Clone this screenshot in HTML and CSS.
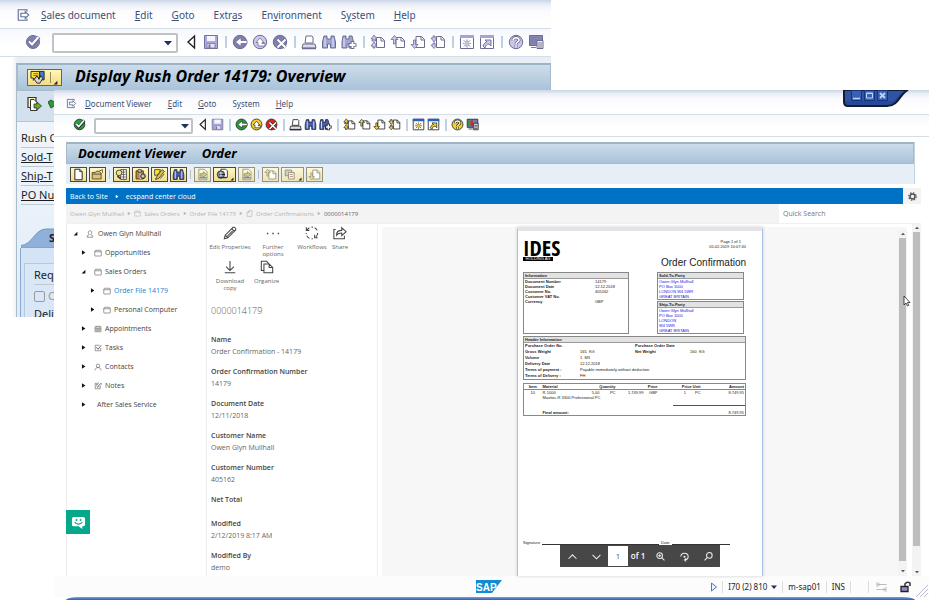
FILE: index.html
```html
<!DOCTYPE html>
<html lang="en">
<head>
<meta charset="utf-8">
<title>Document Viewer Order</title>
<link rel="stylesheet" href="styles.css">
</head>
<body>
<svg class="sprite" aria-hidden="true">
  <symbol id="exit" viewBox="0 0 16 16"><path d="M12 4V2H2v12h10v-2M5 6h5V4l4 4-4 4v-2H5z" fill="none" stroke="#5f7195" stroke-width="1.3"/></symbol>
  <symbol id="ok" viewBox="0 0 16 16"><circle cx="8" cy="8" r="6.5" fill="var(--go)" stroke="var(--ink)"/><path d="M4 8l3 3 7-8" fill="none" stroke="var(--ink)" stroke-width="3.6"/><path d="M4 7.500l3 3 6.500-7.500" fill="none" stroke="#fff" stroke-width="2"/></symbol>
  <symbol id="tri" viewBox="0 0 16 16"><path d="M11.500 2v12L5 8z" fill="#fff" stroke="#222" stroke-width="1.4"/></symbol>
  <symbol id="save" viewBox="0 0 16 16"><path d="M1.500 1.500h13v13h-13z" fill="#a9abdc" stroke="#73739f"/><path d="M4 2h8v5H4z" fill="#f5f5ff"/><path d="M4 9.500h8V14H4z" fill="#e4e4f6" stroke="#73739f" stroke-width=".8"/><path d="M5.500 10.500h2V14h-2z" fill="#73739f"/></symbol>
  <symbol id="back" viewBox="0 0 16 16"><circle cx="8" cy="8" r="6.700" fill="var(--go)" stroke="var(--ink)"/><path d="M15 6.500H9V3.500L3.500 8 9 12.500v-3h6z" fill="#fff" stroke="var(--ink)" stroke-width=".8"/></symbol>
  <symbol id="up" viewBox="0 0 16 16"><circle cx="8" cy="8" r="6.700" fill="var(--hot)" stroke="var(--ink)"/><path d="M8 4L4 8.500h2V12h7V9.500H10V8.500h2z" fill="#fff" stroke="var(--ink)" stroke-width=".8"/></symbol>
  <symbol id="cancel" viewBox="0 0 16 16"><circle cx="8" cy="8" r="6.700" fill="var(--stop)" stroke="var(--ink)"/><path d="M5.500 5.500l8 8m0-8l-8 8" stroke="var(--ink)" stroke-width="3.500"/><path d="M5.500 5.500l8 8m0-8l-8 8" stroke="#fff" stroke-width="2"/></symbol>
  <symbol id="print" viewBox="0 0 16 16"><path d="M5 2h6l1 1v6H4z" fill="#fff" stroke="var(--ink)"/><path d="M2 10h12l1 4H1z" fill="#dcdcf0" stroke="var(--ink)"/><path d="M1 14.500h14" stroke="var(--ink)" stroke-width="1.500"/></symbol>
  <symbol id="find" viewBox="0 0 16 16"><path d="M3 2h3v3h4V2h3l1.500 6v6h-5v-4h-3v4h-5V8z" fill="var(--bin)" stroke="var(--ink)"/><path d="M4 4v9M12 4v9" stroke="#d5dcff" stroke-width="1.200"/></symbol>
  <symbol id="findnext" viewBox="0 0 16 16"><path d="M2 2h3v3h3V2h3l1.500 6v6H8v-4H6v4H1V8z" fill="var(--bin)" stroke="var(--ink)"/><path d="M3 4v9" stroke="#d5dcff" stroke-width="1.200"/><path d="M11.500 7v8M7.500 11h8" stroke="var(--ink)" stroke-width="3.600"/><path d="M11.500 8v6M8.500 11h6" stroke="#fff" stroke-width="1.800"/></symbol>
  <symbol id="pg1" viewBox="0 0 16 16"><path d="M6.500 3.500h5l3 3v7h-8z" fill="#fff" stroke="var(--ink)"/><path d="M11 3.500V7h3.500" fill="none" stroke="var(--ink)"/><path d="M4 1L1 5h2v1H2v1h4V6H5V5h2zM4 8L1 12h2v2h2v-2h2z" fill="var(--hot)" stroke="var(--ink)" stroke-width=".8"/></symbol>
  <symbol id="pg2" viewBox="0 0 16 16"><path d="M6 3.500h5.500l3 3v7H6z" fill="#fff" stroke="var(--ink)"/><path d="M11 3.500V7h3.500" fill="none" stroke="var(--ink)"/><path d="M4.500 1.500L1 5.500h2.500V10h2V5.500H8z" fill="var(--hot)" stroke="var(--ink)" stroke-width=".8"/></symbol>
  <symbol id="pg3" viewBox="0 0 16 16"><path d="M6 2.500h5.500l3 3v8H6z" fill="#fff" stroke="var(--ink)"/><path d="M11 2.500V6h3.500" fill="none" stroke="var(--ink)"/><path d="M4.500 14.500L1 10.500h2.500V6h2v4.500H8z" fill="var(--hot)" stroke="var(--ink)" stroke-width=".8"/></symbol>
  <symbol id="pg4" viewBox="0 0 16 16"><path d="M6.500 2.500h5l3 3v8h-8z" fill="#fff" stroke="var(--ink)"/><path d="M11 2.500V6h3.500" fill="none" stroke="var(--ink)"/><path d="M4 8L1 4h2V2h2v2h2zM4 14.500L1 11h2V9h2v2h2z" fill="var(--hot)" stroke="var(--ink)" stroke-width=".8"/></symbol>
  <symbol id="session" viewBox="0 0 16 16"><path d="M1.500 1.500h13v13h-13z" fill="#fff" stroke="var(--ink)"/><path d="M1 1h14v3H1z" fill="var(--cap)"/><path d="M8 5.500v8M4 9.500h8M5 6.500l6 6m0-6l-6 6" stroke="var(--ink)" stroke-width="1"/><path d="M8 6v7M4.500 9.500h7M6 7.500l4 4m0-4l-4 4" stroke="var(--hot)" stroke-width=".8"/><circle cx="8" cy="9.500" r="1.300" fill="var(--hot)"/></symbol>
  <symbol id="shortcut" viewBox="0 0 16 16"><path d="M1.500 1.500h13v13h-13z" fill="#fff" stroke="var(--ink)"/><path d="M1 1h14v3H1z" fill="var(--cap)"/><path d="M6 6h6v6l-2-2c-2 0-3 1-4 4l-2-2c1-3 3-4 4-4z" fill="var(--hot)" stroke="var(--ink)" stroke-width=".9"/></symbol>
  <symbol id="help" viewBox="0 0 16 16"><circle cx="8" cy="8" r="6.700" fill="var(--hot)" stroke="var(--ink)"/><path d="M5 6.500c0-4 6.500-3.500 6 0C10.800 8 8 8 8 10.200M8 11.300v2" fill="none" stroke="var(--ink)" stroke-width="3.200"/><path d="M5 6.500c0-4 6.500-3.500 6 0C10.800 8 8 8 8 10.200M8 11.300v2" fill="none" stroke="#fff" stroke-width="1.600"/></symbol>
  <symbol id="layout" viewBox="0 0 16 16"><path d="M1.500 1.500h13v10h-13z" fill="var(--l0)" stroke="var(--ink)"/><path d="M2.500 3h3v7h-3z" fill="var(--go)"/><path d="M5.500 3h3v7h-3z" fill="var(--stop)"/><path d="M9 6.500h6v8H9z" fill="#eee" stroke="var(--ink)"/><path d="M10 9h4M10 11h4M10 13h4M3 13.500h5" stroke="var(--ink)" stroke-width=".9"/></symbol>
  <symbol id="new" viewBox="0 0 16 16"><path d="M3.500 1.500h6l3 3v10h-9z" fill="#fff" stroke="#222" stroke-width="1.200"/><path d="M9.500 1.500v3h3" fill="none" stroke="#222"/></symbol>
  <symbol id="open" viewBox="0 0 16 16"><path d="M1.500 13.500v-8h4l1-1.500h5v2h1v7.500z" fill="#d9c38b" stroke="#4a3d1e"/><path d="M1.500 7.500h11" stroke="#4a3d1e"/><path d="M10 4l4-2v4" fill="#fff" stroke="#4a3d1e"/></symbol>
  <symbol id="list" viewBox="0 0 16 16"><path d="M7 2h7v12H7z" fill="#fff" stroke="#333"/><path d="M8 5h5M8 8h5M8 11h5M10.500 2v12" stroke="#555"/><circle cx="5" cy="6" r="3.500" fill="#e6e38a" stroke="#333"/><path d="M3 10l4 3" stroke="#333" stroke-width="2"/></symbol>
  <symbol id="clip" viewBox="0 0 16 16"><path d="M2.500 3.500h9v10h-9z" fill="#b98346" stroke="#3d2c12"/><path d="M5 2h4v3H5z" fill="#ddd" stroke="#333"/><path d="M7 7h4v6H7z" fill="#fff"/><circle cx="11" cy="10" r="3" fill="#8d8d8d" stroke="#222"/><circle cx="11" cy="10" r="1" fill="#fff"/></symbol>
  <symbol id="edit" viewBox="0 0 16 16"><path d="M2 2h7l-1 4-4 3H2z" fill="#ffe23d" stroke="#333"/><path d="M14 4L7 13l-4 1 2-4 6-8z" fill="#d8c63a" stroke="#333"/><path d="M9 13l5-6" stroke="#333"/></symbol>
  <symbol id="folderarrow" viewBox="0 0 16 16"><path d="M3.500 1.500h7l3 3v10h-10z" fill="#f6f6ee" stroke="#8c8b77"/><path d="M5 7h4V4.500L13 8l-4 3.500V10H5z" fill="#d9d264" stroke="#8c8b77"/><path d="M4 12h9" stroke="#8c8b77" stroke-width="2"/></symbol>
  <symbol id="printq" viewBox="0 0 16 16"><path d="M6 1.500h6l2 2v8H6z" fill="#fff" stroke="#222"/><circle cx="6" cy="8" r="4.500" fill="#8590a8" stroke="#222"/><path d="M3 12h10M4 8h7" stroke="#222" stroke-width="1.400"/><path d="M6 5v5" stroke="#fff"/></symbol>
  <symbol id="copies" viewBox="0 0 16 16"><path d="M1.500 2.500h8v7h-8z" fill="#c3d8c2" stroke="#85887d"/><path d="M5.500 5.500h7v8h-7z" fill="#f7f7ef" stroke="#85887d"/><path d="M7 8h4M7 10.500h4" stroke="#cc7a6a"/></symbol>
  <symbol id="services" viewBox="0 0 20 16"><path d="M2.500 1.500h9v7H7l-2 2.500v-2.500H2.500z" fill="#ffe23d" stroke="#222"/><path d="M5 4h5M5 6h4" stroke="#7a6a10"/><path d="M11.500 1.500h5v9h-4z" fill="#3d7fd4" stroke="#222"/><path d="M6 10l3-4 2 4 2-4 2 3-3 5h-3z" fill="#d8d8d8" stroke="#222"/></symbol>
  <symbol id="outdoc" viewBox="0 0 16 16"><path d="M2 1.500h8v10H2z" fill="#fff7b0" stroke="#333" stroke-width="1.200"/><path d="M4.500 3.500H8l3 3v8H4.500z" fill="#fff" stroke="#333"/><path d="M8 8h3V6l4.500 4L11 14v-2H8z" fill="#67ab25" stroke="#333" stroke-width=".8"/></symbol>
  <symbol id="folder" viewBox="0 0 16 16"><path d="M1.500 13V4.500L3 2.500h10l1.500 2V13q0 1-1 1h-11q-1 0-1-1zM1.500 5.500h13" fill="none" stroke="currentColor" stroke-width="1.300"/></symbol>
  <symbol id="person" viewBox="0 0 16 16"><circle cx="8" cy="5.500" r="3.500" fill="none" stroke="currentColor" stroke-width="1.300"/><path d="M2 15c0-8 12-8 12 0" fill="none" stroke="currentColor" stroke-width="1.300"/></symbol>
  <symbol id="customer" viewBox="0 0 16 16"><path d="M8 1.500c5 0 3.500 6 1.500 8l4 2v3h-11v-3l4-2c-2-2-3.500-8 1.500-8z" fill="none" stroke="currentColor" stroke-width="1.300"/></symbol>
  <symbol id="cal" viewBox="0 0 16 16"><path d="M2 3.500h12v10H2zM2 6.500h12M4.500 1.500v3M8 1.500v3M11.500 1.500v3M2 10h12M6 6v7M10 6v7" fill="none" stroke="currentColor" stroke-width="1.200"/></symbol>
  <symbol id="task" viewBox="0 0 16 16"><path d="M11 2.500H2.500v11h11V8" fill="none" stroke="currentColor" stroke-width="1.300"/><path d="M4.500 6.500l3.500 4 6.500-8" fill="none" stroke="currentColor" stroke-width="2"/></symbol>
  <symbol id="note" viewBox="0 0 16 16"><path d="M10 2.500H2.500v11h10V8M4 5h4M4 8h3" fill="none" stroke="currentColor" stroke-width="1.300"/><path d="M7 11l1-3 6-6 1.500 1.500-6 6z" fill="none" stroke="currentColor" stroke-width="1.300"/></symbol>
  <symbol id="right" viewBox="0 0 8 8"><path d="M1.500 .500v7L7 4z" fill="currentColor"/></symbol>
  <symbol id="opened" viewBox="0 0 8 8"><path d="M7 1v6H1z" fill="currentColor"/></symbol>
  <symbol id="down" viewBox="0 0 8 8"><path d="M0 2h8L4 6.500z" fill="currentColor"/></symbol>
  <symbol id="upc" viewBox="0 0 8 8"><path d="M0 6h8L4 1.500z" fill="currentColor"/></symbol>
</svg>

<div class="desktop">
  <section class="window rear" aria-label="Display Rush Order">
    <nav class="menubar">
      <svg class="exit"><use href="#exit"/></svg>
      <a href="#"><u>S</u>ales document</a><a href="#"><u>E</u>dit</a><a href="#"><u>G</u>oto</a><a href="#">Extr<u>a</u>s</a><a href="#">En<u>v</u>ironment</a><a href="#">S<u>y</u>stem</a><a href="#"><u>H</u>elp</a>
    </nav>
    <div class="toolbar">
      <button aria-label="Enter"><svg><use href="#ok"/></svg></button>
      <span class="combo"><input aria-label="Command"><svg><use href="#down"/></svg></span>
      <button class="tri" aria-label="Collapse"><svg><use href="#tri"/></svg></button>
      <button aria-label="Save"><svg><use href="#save"/></svg></button><i class="sep"></i>
      <button aria-label="Back"><svg><use href="#back"/></svg></button><button aria-label="Exit"><svg><use href="#up"/></svg></button><button aria-label="Cancel"><svg><use href="#cancel"/></svg></button><i class="sep"></i>
      <button aria-label="Print"><svg><use href="#print"/></svg></button><button aria-label="Find"><svg><use href="#find"/></svg></button><button aria-label="Find next"><svg><use href="#findnext"/></svg></button><i class="sep"></i>
      <button aria-label="First page"><svg><use href="#pg1"/></svg></button><button aria-label="Previous page"><svg><use href="#pg2"/></svg></button><button aria-label="Next page"><svg><use href="#pg3"/></svg></button><button aria-label="Last page"><svg><use href="#pg4"/></svg></button><i class="sep"></i>
      <button aria-label="New session"><svg><use href="#session"/></svg></button><button aria-label="Shortcut"><svg><use href="#shortcut"/></svg></button><i class="sep"></i>
      <button aria-label="Help"><svg><use href="#help"/></svg></button><button aria-label="Layout"><svg><use href="#layout"/></svg></button>
    </div>
    <div class="rear-frame">
      <header class="title"><button class="services" aria-label="Services"><svg class="svc"><use href="#services"/></svg><i></i><svg class="corner"><use href="#opened"/></svg></button><h1>Display Rush Order 14179: Overview</h1></header>
      <div class="rear-tools"><svg class="outdoc"><use href="#outdoc"/></svg><svg class="leaf" viewBox="0 0 10 10"><path d="M0 3l3-2 3 2 4-2-4 6-3 2z" fill="#2e9a32" stroke="#1e5c22"/></svg></div>
      <div class="order">
        <p>Rush O</p><p><a href="#">Sold-T</a></p><p><a href="#">Ship-T</a></p><p><a href="#">PO Nu</a></p>
        <div class="tab"><svg viewBox="0 0 40 20" preserveAspectRatio="none"><path d="M0 20V17.500C11 17 14 1 25 1H40V20z" fill="#8fb1d9" stroke="#7497c4"/></svg><b>S</b></div>
        <div class="sales"><div class="sales-box">
          <p>Req.</p>
          <label><input type="checkbox">C</label>
          <p class="plain">Deliv</p>
        </div></div>
      </div>
    </div>
  </section>

  <section class="window front" aria-label="Document Viewer">
    <div class="controls">
      <svg viewBox="0 0 70 20"><path d="M2 0H66C58 3 57 16 45 16H6Q2 16 2 12z" fill="#24489a" stroke="#131c30" stroke-width="2"/><path d="M3 1H62C57 4 55 8 51 11H3z" fill="#3960b0" opacity=".5"/></svg>
      <div class="control-row">
        <button aria-label="Minimize"><svg viewBox="0 0 9 9"><path d="M1 7.500h7" stroke="#b8d2ff" stroke-width="1.500"/></svg></button>
        <button aria-label="Maximize"><svg viewBox="0 0 9 9"><path d="M1.500 2h6v5h-6zM1 2.500h7" fill="none" stroke="#b8d2ff"/></svg></button>
        <button aria-label="Close"><svg viewBox="0 0 9 9"><path d="M2 2l5 5m0-5l-5 5" stroke="#b8d2ff" stroke-width="2"/></svg></button>
      </div>
    </div>
    <nav class="menubar">
      <svg class="exit"><use href="#exit"/></svg>
      <a href="#"><u>D</u>ocument Viewer</a><a href="#"><u>E</u>dit</a><a href="#"><u>G</u>oto</a><a href="#">S<u>y</u>stem</a><a href="#"><u>H</u>elp</a>
    </nav>
    <div class="toolbar">
      <button aria-label="Enter"><svg><use href="#ok"/></svg></button>
      <span class="combo"><input aria-label="Command"><svg><use href="#down"/></svg></span>
      <button class="tri" aria-label="Collapse"><svg><use href="#tri"/></svg></button>
      <button aria-label="Save"><svg><use href="#save"/></svg></button><i class="sep"></i>
      <button aria-label="Back"><svg><use href="#back"/></svg></button><button aria-label="Exit"><svg><use href="#up"/></svg></button><button aria-label="Cancel"><svg><use href="#cancel"/></svg></button><i class="sep"></i>
      <button aria-label="Print"><svg><use href="#print"/></svg></button><button aria-label="Find"><svg><use href="#find"/></svg></button><button aria-label="Find next"><svg><use href="#findnext"/></svg></button><i class="sep"></i>
      <button aria-label="First page"><svg><use href="#pg1"/></svg></button><button aria-label="Previous page"><svg><use href="#pg2"/></svg></button><button aria-label="Next page"><svg><use href="#pg3"/></svg></button><button aria-label="Last page"><svg><use href="#pg4"/></svg></button><i class="sep"></i>
      <button aria-label="New session"><svg><use href="#session"/></svg></button><button aria-label="Shortcut"><svg><use href="#shortcut"/></svg></button><i class="sep"></i>
      <button aria-label="Help"><svg><use href="#help"/></svg></button><button aria-label="Layout"><svg><use href="#layout"/></svg></button>
    </div>
    <div class="frame">
      <header class="title"><h2>Document Viewer</h2><h2>Order</h2></header>
      <div class="actions">
        <button aria-label="New"><svg><use href="#new"/></svg></button><button aria-label="Open"><svg><use href="#open"/></svg></button><i></i>
        <button aria-label="Details"><svg><use href="#list"/></svg></button><button aria-label="Attributes"><svg><use href="#clip"/></svg></button><button aria-label="Change"><svg><use href="#edit"/></svg></button><button aria-label="Search"><svg><use href="#find"/></svg></button><i></i>
        <button class="off" aria-label="Export"><svg><use href="#folderarrow"/></svg></button><button class="wide" aria-label="Print document"><svg><use href="#printq"/></svg><svg class="corner"><use href="#opened"/></svg></button><button class="off" aria-label="Send"><svg><use href="#folderarrow"/></svg></button><i></i>
        <button class="off" aria-label="Previous"><svg><use href="#pg2"/></svg></button><button class="wide off" aria-label="Copies"><svg><use href="#copies"/></svg><svg class="corner"><use href="#opened"/></svg></button><button class="off" aria-label="Next"><svg><use href="#pg3"/></svg></button>
      </div>
    </div>
    <div class="portal">
      <div class="suite">
        <nav><a href="#">Back to Site</a><svg><use href="#right"/></svg><a href="#">ecspand center cloud</a></nav>
        <button aria-label="Settings"><svg viewBox="0 0 16 16"><circle cx="8" cy="8" r="6.500" fill="none" stroke="#555" stroke-width="2.500" stroke-dasharray="2.600 2.500"/><circle cx="8" cy="8" r="4.300" fill="none" stroke="#555" stroke-width="2.600"/></svg></button>
      </div>
      <div class="crumbs">
        <nav><a href="#">Owen Glyn Mullhall</a><svg class="arr"><use href="#right"/></svg><svg class="ico"><use href="#folder"/></svg><a href="#">Sales Orders</a><svg class="arr"><use href="#right"/></svg><a href="#">Order File 14179</a><svg class="arr"><use href="#right"/></svg><svg class="ico" viewBox="0 0 16 16"><path d="M7 1.500h6.500v13h-11V6zM7 1.500V6H2.500" fill="none" stroke="currentColor" stroke-width="1.500"/></svg><a href="#">Order Confirmations</a><svg class="arr"><use href="#right"/></svg><b>0000014179</b></nav>
        <input type="search" placeholder="Quick Search" aria-label="Quick Search">
      </div>
      <div class="work">
        <aside>
          <ul class="tree">
            <li class="l0"><svg class="tw"><use href="#opened"/></svg><svg class="ti"><use href="#customer"/></svg><a href="#">Owen Glyn Mullhall</a></li>
            <li class="l1"><svg class="tw"><use href="#right"/></svg><svg class="ti"><use href="#folder"/></svg><a href="#">Opportunities</a></li>
            <li class="l1"><svg class="tw"><use href="#opened"/></svg><svg class="ti"><use href="#folder"/></svg><a href="#">Sales Orders</a></li>
            <li class="l2"><svg class="tw"><use href="#right"/></svg><svg class="ti"><use href="#folder"/></svg><a class="here" href="#">Order File 14179</a></li>
            <li class="l2"><svg class="tw"><use href="#right"/></svg><svg class="ti"><use href="#folder"/></svg><a href="#">Personal Computer</a></li>
            <li class="l1"><svg class="tw"><use href="#right"/></svg><svg class="ti"><use href="#cal"/></svg><a href="#">Appointments</a></li>
            <li class="l1"><svg class="tw"><use href="#right"/></svg><svg class="ti"><use href="#task"/></svg><a href="#">Tasks</a></li>
            <li class="l1"><svg class="tw"><use href="#right"/></svg><svg class="ti"><use href="#person"/></svg><a href="#">Contacts</a></li>
            <li class="l1"><svg class="tw"><use href="#right"/></svg><svg class="ti"><use href="#note"/></svg><a href="#">Notes</a></li>
            <li class="l1"><svg class="tw"><use href="#right"/></svg><a href="#">After Sales Service</a></li>
          </ul>
          <button class="bot" aria-label="Chat"><svg viewBox="0 0 16 16"><path d="M3 2h10q2 0 2 2v6q0 2-2 2h-1v3l-4-3H3q-2 0-2-2V4q0-2 2-2z" fill="#fff"/><path d="M4 7.500c1.500 3 6.500 3 8 0" fill="none" stroke="#04a88a" stroke-width="1.200"/><circle cx="5.800" cy="5.300" r="1" fill="#04a88a"/><circle cx="10.200" cy="5.300" r="1" fill="#04a88a"/></svg></button>
        </aside>
        <section class="details">
          <div class="cmds">
            <button><svg viewBox="0 0 16 16"><path d="M1.500 14.500l1-4 9-9q1.500-.500 2.500.500t.500 2.500l-9 9zM2.500 10.500l3 3M10 3l3 3M4.500 12l6.500-6.500" /></svg>Edit Properties</button>
            <button class="wrap"><svg viewBox="0 0 16 16"><path d="M1 8.500h1.600M7.200 8.500h1.600M13.400 8.500h1.600" stroke-width="1.600"/></svg>Further options</button>
            <button><svg viewBox="0 0 16 16"><path d="M2 5a6.600 6.600 0 0 1 3-3M1.500 1.500v3.500H5M7.500 1.300h1.500M11 2a6.600 6.600 0 0 1 3 3M14.500 8a6.600 6.600 0 0 1-2 4.500M14.500 13.500H11V10M9 14.600H7.500M5 14a6.600 6.600 0 0 1-3-3M1.400 9V8"/></svg>Workflows</button>
            <button><svg viewBox="0 0 16 16"><path d="M3 4H1v10.500h12V11M4 10.500c0-4 2-5.500 6-5.500V2l5 4.500-5 4.500V8c-3 0-4.500.500-6 2.500z"/></svg>Share</button>
            <button class="wrap"><svg viewBox="0 0 16 16"><path d="M8 1v10.500M3.500 7.500L8 12l4.500-4.500M2 14.500h12"/></svg>Download copy</button>
            <button class="organize"><svg viewBox="0 0 16 16"><path d="M4.500 12H1.500V1.500h6l2.500 2.500M4.500 4.500h6l4 4v6h-10zM10.500 4.500v4h4"/></svg>Organize</button>
          </div>
          <h3>0000014179</h3>
          <dl>
            <dt>Name</dt><dd>Order Confirmation - 14179</dd>
            <dt>Order Confirmation Number</dt><dd>14179</dd>
            <dt>Document Date</dt><dd>12/11/2018</dd>
            <dt>Customer Name</dt><dd>Owen Glyn Mullhall</dd>
            <dt>Customer Number</dt><dd>405162</dd>
            <dt>Net Total</dt><dd class="empty"></dd>
            <dt>Modified</dt><dd>2/12/2019 8:17 AM</dd>
            <dt>Modified By</dt><dd>demo</dd>
          </dl>
        </section>
        <section class="viewer">
          <article class="sheet">
            <div class="top">
              <div class="ides"><b>IDES</b><small>HOLDING AG</small></div>
              <div class="stamp"><p>Page 1 of 1</p><p>05.02.2019 10:07:40</p></div>
            </div>
            <h4>Order Confirmation</h4>
            <div class="boxes">
              <div class="box info"><h5>Information</h5><dl><dt>Document Number</dt><dd>14179</dd><dt>Document Date</dt><dd>12.12.2018</dd><dt>Customer No.</dt><dd>405162</dd><dt>Customer VAT No.</dt><dd></dd><dt>Currency</dt><dd>GBP</dd></dl></div>
              <div class="parties">
                <div class="box"><h5>Sold-To-Party</h5><address>Owen Glyn Mullhall<br>PO Box 1000<br>LONDON W4 5WR<br>GREAT BRITAIN</address></div>
                <div class="box"><h5>Ship-To-Party</h5><address>Owen Glyn Mullhall<br>PO Box 1000<br>LONDON<br>W4 5WR<br>GREAT BRITAIN</address></div>
              </div>
            </div>
            <div class="box head"><h5>Header Information</h5>
              <dl><dt>Purchase Order No.</dt><dd></dd><dt>Purchase Order Date</dt><dd></dd>
              <dt>Gross Weight</dt><dd>165&nbsp; KG</dd><dt>Net Weight</dt><dd>160&nbsp; KG</dd>
              <dt>Volume</dt><dd class="span">1&nbsp; M3</dd>
              <dt>Delivery Date</dt><dd class="span">12.12.2018</dd>
              <dt>Terms of payment :</dt><dd class="span">Payable immediately without deduction</dd>
              <dt>Terms of Delivery :</dt><dd class="span">FH</dd></dl>
            </div>
            <table>
              <colgroup><col class="c1"><col class="c2"><col class="c3"><col class="c4"><col class="c5"><col class="c6"><col class="c7"><col></colgroup>
              <thead><tr><th>Item</th><th class="t">Material</th><th colspan="2">Quantity</th><th colspan="2">Price</th><th>Price Unit</th><th>Amount</th></tr></thead>
              <tbody>
                <tr><td>10</td><td class="t">R-1000</td><td>5,00</td><td>PC</td><td>1.749,99</td><td>GBP</td><td>1 &nbsp; &nbsp; &nbsp; &nbsp;PC</td><td>8.749,95</td></tr>
                <tr><td></td><td class="t" colspan="7">Maxitec-R 3300 Professional PC</td></tr>
              </tbody>
              <tfoot><tr><td></td><td class="t" colspan="5">Final amount:</td><td class="sum" colspan="2">8.749,95</td></tr></tfoot>
            </table>
            <div class="sign"><span>Signature</span><i></i><span>Date</span><i class="short"></i></div>
            <div class="pager">
              <button aria-label="Previous page"><svg viewBox="0 0 16 16"><path d="M1 12l7-7 7 7"/></svg></button>
              <button aria-label="Next page"><svg viewBox="0 0 16 16"><path d="M1 5l7 7 7-7"/></svg></button>
              <input value="1" aria-label="Page"><span>of 1</span>
              <button aria-label="Zoom in"><svg viewBox="0 0 16 16"><circle cx="6.500" cy="6.500" r="5"/><path d="M10.500 10.500l4.500 4.500M6.500 4v5M4 6.500h5"/></svg></button>
              <button aria-label="Rotate"><svg viewBox="0 0 16 16"><path d="M1.500 8a6.500 6 0 1 1 7 6M11 11.500L8 14l3 2.500"/><circle cx="8" cy="8.500" r="1"/></svg></button>
              <button aria-label="Search"><svg viewBox="0 0 16 16"><circle cx="9.500" cy="6" r="5"/><path d="M6 9.500L1 15"/></svg></button>
            </div>
          </article>
          <div class="scroll inner"><svg><use href="#upc"/></svg><i></i><svg><use href="#down"/></svg></div>
        </section>
        <div class="scroll"><svg><use href="#upc"/></svg><i></i><svg><use href="#down"/></svg></div>
      </div>
    </div>
    <footer>
      <svg class="sap" viewBox="0 0 26 13"><path d="M0 0H26L16 13H0z" fill="#128bd2"/><text x="0" y="11">SAP</text></svg>
      <svg class="play" viewBox="0 0 8 10"><path d="M1.500 1v8L6.500 5z"/></svg>
      <span class="sys">I70 (2) 810<svg><use href="#down"/></svg></span><span>m-sap01</span><span>INS</span><span class="gap"></span>
      <svg class="swap" viewBox="0 0 12 10"><path d="M1.500 0v5M2 2.500h9M4 1L2 2.500 4 4M10.500 5v5M1 7.500h9M8 6l2 1.500L8 9" fill="none" stroke="#bbb"/></svg>
      <svg class="lock" viewBox="0 0 12 12"><path d="M1 5.500h7v5H1z" fill="#8f8fc4" stroke="#222" stroke-width="1.300"/><path d="M5 5V3q2-3 5-1v3" fill="none" stroke="#333" stroke-width="1.500"/></svg>
      <svg class="grip" viewBox="0 0 12 12"><path d="M0 12L12 0M4 12l8-8M8 12l4-4" stroke="#bbc" fill="none"/></svg>
    </footer>
    <div class="rim"></div>
    <svg class="cursor" viewBox="0 0 8 12"><path d="M1 1v9l2-2 1.500 3 1.200-.600L4.500 7.500H7z" fill="#fff" stroke="#222" stroke-width=".8"/></svg>
  </section>
</div>
</body>
</html>
```
FILE: styles.css
```css
* { box-sizing: border-box; }
body { margin: 0; background: #fff; color: #444; font-family: "Open Sans", "Noto Sans", sans-serif; }
.sprite { position: absolute; width: 0; height: 0; }
a { color: inherit; text-decoration: none; }
h1, h2, h3, h4, h5, p, dl, dd, ul { margin: 0; padding: 0; }
button { margin: 0; padding: 0; border: 0; background: none; color: inherit; font: inherit; }
input { margin: 0; font: inherit; }
svg { display: block; flex: none; }

/* Two overlapping windows share one grid cell */
.desktop { display: grid; min-height: 100vh; }
.window { grid-area: 1 / 1; min-width: 0; }
.menubar, .toolbar { display: flex; align-items: center; }
.menubar { font-family: "Noto Sans", sans-serif; color: #3c4f78; border-bottom: 1px solid #d5dde6; background: linear-gradient(#c9d5e6, #e9eef6 15%, #fcfcfe 40%, #fff); }
.toolbar { border-bottom: 1px solid #d5dde6; background: linear-gradient(#f7f8fc, #fff 60%); }
.toolbar button { display: flex; justify-content: center; align-items: center; }
.sep { flex: none; height: 12px; border-left: 2px solid #bdd2e2; }
.combo { display: flex; align-items: center; border: 2px solid #c0c2c4; border-radius: 2px; background: #fff; }
.combo input { flex: 1; min-width: 0; height: 100%; border: 0; padding: 0 4px; background: none; }
.combo svg { width: 8px; height: 8px; color: #20305c; }
.title { display: flex; align-items: center; background: linear-gradient(#cddcea, #a9c3da); border: 1px solid #a5bacb; border-top: 2px solid #9db3c6; color: #000; }
.title h1, .title h2 { font-family: "Noto Sans", sans-serif; font-style: italic; font-weight: 700; white-space: nowrap; }

/* Rear window */
.rear { --ink: #6c6c92; --go: #7f80b0; --hot: #c9c9ee; --stop: #7f80b0; --bin: #a3a6d2; --cap: #a3a6d2; --l0: #8485b2;
  width: min(551px, 100%); height: 317px; overflow: hidden; background: linear-gradient(90deg, #fff 12px, #e9eef5 17px); }
.rear .menubar { height: 29px; padding: 2px 0 0 16px; font-size: 10px; }
.rear .menubar a { margin-right: 19px; }
.rear .exit { width: 15px; height: 14px; margin-right: 10px; }
.rear .toolbar { height: 28px; padding-left: 23px; padding-bottom: 2px; }
.rear .toolbar button { width: 20px; }
.rear .toolbar button svg { width: 16px; height: 16px; }
.rear .combo { width: 126px; height: 20px; margin: 2px 3px 0 9px; padding-right: 4px; }
.rear .sep { width: 2px; margin: 0 3px 0 4px; }
.rear-frame { margin: 6px 0 0 16px; border-left: 1px solid #a9bccb; }
.rear .title { height: 28px; padding-left: 9px; }
.rear h1 { font-size: 16px; line-height: 20px; margin: 0 0 3px 13px; }
.services { display: flex; align-items: center; width: 35px; height: 17px; border: 1px solid #6d6645; background: linear-gradient(#fff6b8, #f3dc85); }
.svc { width: 20px; height: 15px; }
.services i { height: 11px; margin: 0 2px; border-left: 1px solid #9a8c55; }
.corner { width: 5px; height: 5px; align-self: flex-end; color: #222; }
.rear-tools { display: flex; align-items: center; gap: 6px; height: 31px; padding: 0 0 4px 9px; background: #d3e0ee; border-bottom: 1px solid #b3c6d9; }
.outdoc { width: 16px; height: 16px; }
.leaf { width: 10px; height: 10px; }
.order { padding: 8px 0 0 4px; background: linear-gradient(#f0f5fb, #e1ecf8); font: 11px/16px "Noto Sans", sans-serif; color: #1d1d24; height: 196px; }
.order p { height: 18px; margin-bottom: 1px; border-bottom: 1px solid #bfc9d4; }
.order p a { text-decoration: underline; }
.tab { display: flex; align-items: center; height: 20px; margin-top: 23px; }
.tab svg { width: 40px; height: 20px; }
.tab b { align-self: stretch; margin-left: -12px; line-height: 20px; }
.sales { margin-left: -1px; padding: 15px 0 0 3px; background: #d4e3f5; border-left: 1px solid #89a8d0; }
.sales-box { padding: 3px 0 0 9px; border: 1px solid #b4c9e3; background: #dae7f6; }
.order label { display: flex; align-items: center; gap: 3px; height: 20px; color: #999; white-space: nowrap; }
.order input { appearance: none; width: 11px; height: 11px; border: 1px solid #999; border-radius: 2px; }
.order .plain { border: 0; }

/* Front window */
.front { --ink: #222; --go: #20a03c; --hot: #f5d130; --stop: #e5231f; --bin: #4a5fae; --cap: #285fbd; --l0: #6b7bb8;
  display: flex; flex-direction: column; position: relative; margin: 90px 0 0 54px; min-height: calc(100vh - 90px); background: #fff; }
.front .menubar { height: 25px; padding: 3px 0 0 12px; font-size: 8px; }
.front .menubar a { margin-right: 16px; }
.front .exit { width: 11px; height: 11px; margin-right: 8px; }
.front .toolbar { height: 22px; padding: 0 0 2px 18px; }
.front .toolbar button { width: 15px; }
.front .toolbar button svg { width: 13px; height: 13px; }
.front .combo { width: 99px; height: 16px; margin: 2px 2px 0 7px; padding-right: 2px; }
.front .sep { width: 2px; margin: 0 3px 0 4px; }
.controls { position: absolute; top: 0; right: 17px; width: 70px; height: 20px; }
.controls > svg { width: 70px; height: 20px; }
.control-row { position: absolute; top: 0; left: 9px; display: flex; gap: 2px; }
.control-row button { width: 11px; height: 11px; border: 1px solid #17357c; background: #3a60b4; }
.control-row svg { width: 9px; height: 9px; }
.frame { margin: 5px 14px 0 12px; background: #e6eef7; border-right: 1px solid #c4d2df; }
.front .title { height: 22px; gap: 16px; padding: 0 0 2px 11px; }
.front h2 { font-size: 13px; line-height: 16px; }
.actions { display: flex; align-items: center; gap: 2px; height: 20px; padding: 1px 0 0 4px; }
.actions button { display: flex; align-items: center; justify-content: center; width: 17px; height: 15px; border: 1px solid #4d4936; background: linear-gradient(#fff8c6, #f1dc8a); }
.actions button.wide { width: 23px; gap: 1px; }
.actions svg { width: 13px; height: 13px; }
.actions .corner { width: 4px; height: 4px; }
.actions .off { border-color: #96927a; background: linear-gradient(#fdf8da, #efe4b4); --ink: #8c8b77; --hot: #e6dd92; }
.actions i { height: 9px; margin: 0 1px; border-left: 1px solid #b7bec6; }

/* Portal */
.portal { display: flex; flex-direction: column; flex: 1; margin: 4px 8px 0 12px; font-size: 7px; }
.suite { display: flex; height: 16px; }
.suite nav { display: flex; align-items: center; flex: 1; padding-left: 4px; gap: 7px; background: #0072c6; color: #fff; }
.suite nav svg { width: 4px; height: 5px; }
.suite button { display: flex; align-items: center; justify-content: center; width: 18px; background: #f3f3f3; }
.suite button svg { width: 9px; height: 9px; }
.crumbs { display: flex; height: 19px; }
.crumbs nav { display: flex; align-items: center; flex: 1; gap: 3px; padding: 0 0 0 4px; background: #f3f3f3; color: #b4b4b4; font-size: 6px; white-space: nowrap; }
.crumbs b { color: #666; font-weight: 400; }
.arr { width: 4px; height: 5px; }
.ico { width: 7px; height: 7px; }
.crumbs input { width: 142px; border: 0; padding: 0 4px; color: #666; outline: 0; }
.crumbs input::placeholder { color: #777; opacity: 1; }
.work { display: flex; flex: 1; border-top: 1px solid #f0f0f0; }
aside { position: relative; width: 141px; border: 1px solid #ececec; border-width: 0 1px; }
.tree { list-style: none; color: #444; }
.tree li { display: flex; align-items: center; height: 19px; }
.l0 { padding-left: 6px; }
.l1 { padding-left: 14px; }
.l2 { padding-left: 23px; }
.tw { width: 5px; height: 5px; color: #111; margin-right: 8px; }
.ti { width: 8px; height: 8px; margin-right: 3px; color: #666; }
.l0 .ti { margin-right: 4px; }
.tree li:last-child .tw { margin-right: 11px; }
.here { color: #1b7fd0; }
.bot { position: absolute; left: -1px; bottom: 42px; width: 24px; height: 24px; display: grid; place-items: center; background: #04a88a; }
.bot svg { width: 15px; height: 15px; }
.details { width: 171px; border-right: 1px solid #f0f0f0; padding: 2px 4px 0; }
.cmds { display: grid; grid-template-columns: 38px 48px 30px 26px; font-size: 6px; line-height: 7px; color: #666; }
.cmds button { display: flex; flex-direction: column; align-items: center; height: 34px; white-space: nowrap; }
.cmds .wrap { justify-self: center; width: 30px; white-space: normal; }
.cmds .organize { justify-self: start; padding-left: 5px; }
.cmds svg { width: 14px; height: 14px; margin-bottom: 4px; fill: none; stroke: #444; stroke-width: 1.200; }
.details h3 { margin: 11px 0 17px; font-size: 9px; line-height: 12px; font-weight: 300; color: #555; }
.details dl { line-height: 12px; }
.details dt { font-weight: 600; color: #444; }
.details dd { margin-bottom: 8px; color: #666; }
.details dd:last-child { margin-bottom: 0; }
.details .empty { height: 4px; }
.viewer { flex: 1; display: flex; justify-content: flex-end; margin: 3px 5px 0 4px; background: #f7f7f7; }
.scroll { width: 9px; display: flex; flex-direction: column; align-items: center; justify-content: space-between; gap: 2px; padding: 2px 0; background: #f3f3f3; }
.scroll svg { width: 4px; height: 4px; color: #555; }
.scroll i { flex: 1; width: 7px; background: #bdbdbd; margin-bottom: 22px; }
.scroll.inner { padding-bottom: 3px; margin-top: 3px; }
.scroll.inner i { margin-bottom: 6px; }

/* Order form */
.sheet { position: relative; display: flex; flex-direction: column; width: 246px; margin-right: 135px; padding: 8px 16px 31px 5px; border: 1px solid #a9c1e6; border-width: 0 1px; border-top: 4px solid #e2e4e9; background: #fff; box-shadow: 0 0 3px #ccc; color: #222; font: 4px/5px "Liberation Sans", sans-serif; }
.top { display: flex; justify-content: space-between; }
.ides { width: 40px; color: #000; }
.ides b { display: block; font: 700 22px/16px "Liberation Sans Narrow", "Open Sans Condensed", sans-serif; }
.ides small { display: block; margin-top: 2px; background: #000; color: #fff; font-size: 4px; line-height: 4px; text-align: center; width: 30px; }
.stamp { text-align: right; }
.stamp p:first-child { padding-right: 5px; }
.sheet h4 { align-self: flex-end; font-size: 10px; line-height: 12px; font-weight: 400; margin: -4px 0 3px; }
.box { border: 1px solid #888; }
.box h5 { font-size: 4px; line-height: 5px; background: #e2e2e2; padding-left: 1px; border-bottom: 1px solid #999; }
.box dl, .box address { padding-left: 1px; }
.box dt { font-weight: 700; }
.boxes { display: flex; justify-content: space-between; margin-right: 2px; }
.info { width: 106px; }
.info dl { display: grid; grid-template-columns: 70px 1fr; grid-auto-rows: 5px; }
.parties { display: grid; gap: 1px; width: 87px; }
address { font-style: normal; color: #1515e8; line-height: 5px; }
.head { margin-top: 2px; }
.head dl { display: grid; grid-template-columns: 55px 55px 55px 1fr; grid-auto-rows: 6px; line-height: 6px; }
.head .span { grid-column: span 3; }
.sheet table { width: 100%; margin-top: 3px; table-layout: fixed; border-collapse: collapse; border: 1px solid #888; line-height: 5px; }
.sheet th, .sheet td { padding: 0 1px 0 0; text-align: right; white-space: nowrap; }
.sheet thead tr { border-bottom: 1px solid #888; }
.sheet th:first-child, .sheet td:first-child { text-align: center; }
.sheet th.t, .sheet td.t { text-align: left; }
.c1 { width: 19px; } .c2 { width: 34px; } .c3 { width: 24px; } .c4 { width: 16px; } .c5 { width: 28px; } .c6 { width: 14px; } .c7 { width: 43px; }
.sheet tfoot td { padding-top: 10px; font-weight: 700; }
.sheet tfoot .sum { font-weight: 400; background: linear-gradient(#555, #555) right 5px / 72px 1px no-repeat; }
.sign { display: flex; align-items: flex-end; gap: 2px; margin-top: auto; padding-right: 16px; }
.sign i { flex: 2; border-bottom: 1px solid #333; }
.sign .short { flex: 1; }
.pager { position: absolute; left: 42px; bottom: 9px; width: 160px; height: 22px; display: flex; align-items: center; background: #474747; color: #fff; font: 600 8px/12px "Open Sans", sans-serif; }
.pager button { width: 24px; display: grid; place-items: center; }
.pager svg { width: 9px; height: 9px; fill: none; stroke: #eee; stroke-width: 1.800; overflow: visible; }
.pager input { width: 20px; height: 20px; border: 0; padding: 0; text-align: center; font-size: 7px; font-weight: 400; color: #444; background: #fff; }
.pager span { width: 20px; text-align: center; white-space: nowrap; }

/* Status bar */
footer { display: flex; align-items: center; height: 21px; padding-right: 1px; background: #fcfcfc; color: #222; font: 8px/12px "Noto Sans", sans-serif; }
.sap { width: 26px; height: 13px; margin: 0 auto 0 422px; }
.sap text { font: 700 10px "Liberation Sans", sans-serif; fill: #fff; }
.play { width: 8px; height: 10px; margin-right: 4px; fill: #eef4ff; stroke: #4a78b8; }
footer span { display: flex; align-items: center; gap: 4px; padding: 0 5px; border-left: 1px solid #ddd; white-space: nowrap; }
footer span svg { width: 6px; height: 6px; color: #20305c; }
footer .gap { width: 19px; height: 12px; border-right: 1px solid #ddd; }
.swap { width: 13px; height: 10px; margin: 0 12px 0 6px; }
.lock { width: 12px; height: 12px; margin-right: 4px; }
.grip { width: 12px; height: 12px; align-self: flex-end; }
.rim { height: 3px; margin: 0 14px 0 12px; border-radius: 12px 12px 0 0 / 3px 3px 0 0; background: linear-gradient(#7fa0dc, #3558ad); }
.cursor { position: absolute; right: 18px; top: 205px; width: 8px; height: 12px; }
```
